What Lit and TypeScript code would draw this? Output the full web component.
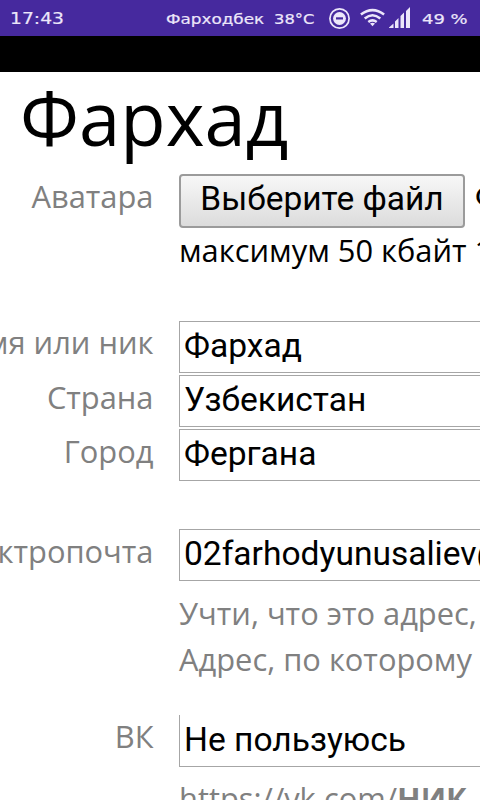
import { LitElement, html, css } from "lit";
import { customElement } from "lit/decorators.js";

@customElement("status-bar")
class StatusBar extends LitElement {
  static styles = css`
    :host {
      display: flex;
      height: 36px;
      background: #46299e;
      color: #ece6fa;
      font: 14.5px/38px "DejaVu Sans", sans-serif;
      white-space: pre;
    }
    .text { transform-origin: 0 50%; flex: none; -webkit-text-stroke: 0.2px #ece6fa; }
    .time { margin-left: 10px; width: 156px; font-size: 16px; transform: scaleX(1.17); }
    .carrier { width: 108px; transform: scaleX(1.16); }
    .temp { width: 55px; transform: scaleX(1.13); }
    .icons { flex: none; width: 93px; height: 36px; }
    .battery { transform: scaleX(1.24); }
  `;
  render() {
    return html`
      <span class="text time">17:43</span>
      <span class="text carrier">Фарходбек</span>
      <span class="text temp">38°C</span>
      <svg class="icons" viewBox="329 0 93 36" fill="#ece6fa">
        <circle cx="339.5" cy="18.5" r="9.6" fill="none" stroke="#ece6fa" stroke-width="1.7" />
        <circle cx="339.5" cy="18.5" r="6.4" />
        <rect x="336" y="17.3" width="7" height="2.2" fill="#46299e" />
        <g fill="none" stroke="#ece6fa" stroke-width="2.5">
          <path d="M360.9 14.6 Q372.5 5.6 384.1 14.6" />
          <path d="M364.7 18.5 Q372.5 12.1 380.3 18.5" />
          <path d="M368.3 22 Q372.5 18.8 376.7 22" />
        </g>
        <path d="M370 23.4 Q372.5 21.9 375 23.4 L372.5 26.2Z" />
        <path d="M389 28V27.5L393.5 23.5V28ZM395 28V21.5L398.5 18V28ZM400.5 28V16L404 12.5V28ZM406 28V11L410 7V28Z" />
      </svg>
      <span class="text battery">49 %</span>
    `;
  }
}

@customElement("app-root")
class AppRoot extends LitElement {
  static styles = css`
    :host {
      display: block;
      width: 480px;
      height: 800px;
      overflow: hidden;
      background: #fff;
      color: #000;
      font: 30.85px/46px "Open Sans", "Noto Sans", sans-serif;
      white-space: nowrap;
    }
    .band { height: 36px; background: #000; }
    .title { height: 101px; margin: 0 0 0 20px; font-size: 74.2px; line-height: 91px; font-weight: 400; }
    .row { display: grid; grid-template-columns: 153.5px 600px; column-gap: 25.5px; }
    .label { display: flex; justify-content: flex-end; height: 46px; margin-top: -1px; color: #808080; }
    .avatar { height: 148px; }
    .avatar .label { margin-top: 0; }
    .name .label, .vk .label { margin-top: -2px; }
    .file { display: flex; gap: 10px; margin-top: 1px; height: 54px; font: 33.5px/46px Roboto, sans-serif; }
    .pick {
      box-sizing: border-box;
      width: 286px;
      height: 54px;
      padding: 0 0 4px;
      border: 2px solid #9b9b9b;
      border-radius: 4px;
      background: linear-gradient(#f7f7f7, #dcdcdc);
      color: #000;
      font: inherit;
    }
    .limit { margin-top: -1px; }
    .input {
      box-sizing: border-box;
      height: 52px;
      margin-bottom: 2px;
      padding-left: 4px;
      border: 1px solid #a6a6a6;
      font: 33.55px/48px Roboto, sans-serif;
    }
    .gap { margin-top: 46px; }
    .hint { color: #808080; }
    .mail-hint { margin-top: 9px; }
    .vk { margin-top: 33px; }
    .clipped { border-top: 0; height: 52px; line-height: 50px; }
    .vk-hint { margin-top: 8px; }
  `;
  render() {
    return html`
      <status-bar></status-bar>
      <div class="band"></div>
      <h1 class="title">Фархад</h1>
      <div class="row avatar">
        <div class="label">Аватара</div>
        <div>
          <div class="file"><button class="pick">Выберите файл</button><span>Файл не выбран</span></div>
          <div class="limit">максимум 50 кбайт 100×100</div>
        </div>
      </div>
      <div class="row name"><div class="label">Имя или ник</div><div class="input">Фархад</div></div>
      <div class="row"><div class="label">Страна</div><div class="input">Узбекистан</div></div>
      <div class="row"><div class="label">Город</div><div class="input">Фергана</div></div>
      <div class="row gap">
        <div class="label">Электропочта</div>
        <div>
          <div class="input">02farhodyunusaliev@</div>
          <div class="hint mail-hint">Учти, что это адрес,<br />Адрес, по которому</div>
        </div>
      </div>
      <div class="row vk">
        <div class="label">ВК</div>
        <div>
          <div class="input clipped">Не пользуюсь</div>
          <div class="hint vk-hint">https://vk.com/<b>НИК</b></div>
        </div>
      </div>
    `;
  }
}
